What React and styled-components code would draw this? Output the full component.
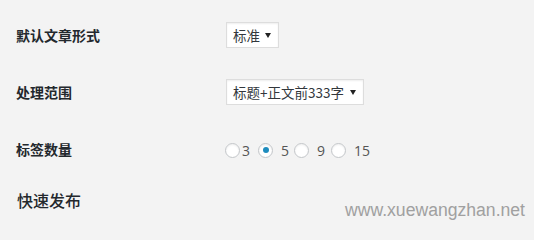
import React from "react";
import styled, { createGlobalStyle } from "styled-components";

const GlobalStyle = createGlobalStyle`
  html, body {
    margin: 0;
    padding: 0;
    background: #f3f3f3;
  }
  body {
    font-family: "Open Sans", "Noto Sans CJK SC", sans-serif;
    color: #23282d;
  }
`;

const Page = styled.div`
  position: relative;
  width: 534px;
  height: 227px;
  overflow: hidden;
  padding-top: 6px;
  box-sizing: border-box;
`;

const Row = styled.div`
  display: flex;
  align-items: center;
  height: 57px;
  padding-left: 16px;
`;

const Label = styled.div`
  width: 210px;
  flex: none;
  font-family: "Noto Sans CJK SC", sans-serif;
  font-size: 14px;
  font-weight: 700;
  color: #23282d;
`;

const SelectBox = styled.div`
  display: flex;
  align-items: center;
  justify-content: space-between;
  box-sizing: border-box;
  width: ${(p) => p.$width}px;
  height: 26px;
  padding: 0 7px 0 6px;
  background: #fff;
  border: 1px solid #ddd;
  box-shadow: inset 0 1px 2px rgba(0, 0, 0, 0.07);
  font-family: "Noto Sans CJK SC", sans-serif;
  font-size: 13.5px;
  color: #32373c;
`;

const Arrow = styled.span`
  width: 0;
  height: 0;
  border-left: 3px solid transparent;
  border-right: 3px solid transparent;
  border-top: 5px solid #222;
  margin-top: 1px;
`;

const Radios = styled.div`
  display: flex;
  align-items: center;
  margin-left: -1px;
  margin-top: 3px;
`;

const Option = styled.label`
  display: flex;
  align-items: center;
  margin-right: ${(p) => p.$after}px;
  font-family: "Open Sans", sans-serif;
  font-size: 14px;
  color: #555;
`;

const Circle = styled.span`
  box-sizing: border-box;
  display: flex;
  align-items: center;
  justify-content: center;
  width: 15px;
  height: 15px;
  border-radius: 50%;
  border: 1px solid #c3c6c9;
  background: #fff;
  box-shadow: inset 0 1px 2px rgba(0, 0, 0, 0.07);
  margin-right: ${(p) => p.$gap}px;

  &::after {
    content: "";
    display: ${(p) => (p.$checked ? "block" : "none")};
    width: 6px;
    height: 6px;
    border-radius: 50%;
    background: #1e8cbe;
  }
`;

const Heading = styled.h2`
  margin: 12px 0 0 17px;
  font-family: "Noto Sans CJK SC", sans-serif;
  font-size: 16px;
  font-weight: 500;
  line-height: 22px;
  color: #23282d;
`;

const Watermark = styled.div`
  position: absolute;
  right: 9px;
  bottom: 6px;
  font-family: "Liberation Sans", Arial, sans-serif;
  font-size: 17.6px;
  color: #a0a0a0;
`;

const options = [
  { value: "3", gap: 2, after: 8 },
  { value: "5", gap: 8, after: 5, checked: true },
  { value: "9", gap: 8, after: 6 },
  { value: "15", gap: 8, after: 0 },
];

export default function App() {
  return (
    <Page>
      <GlobalStyle />
      <Row>
        <Label>默认文章形式</Label>
        <SelectBox $width={53}>
          标准
          <Arrow />
        </SelectBox>
      </Row>
      <Row>
        <Label>处理范围</Label>
        <SelectBox $width={138}>
          标题+正文前333字
          <Arrow />
        </SelectBox>
      </Row>
      <Row>
        <Label>标签数量</Label>
        <Radios>
          {options.map((o) => (
            <Option key={o.value} $after={o.after}>
              <Circle $gap={o.gap} $checked={o.checked} />
              {o.value}
            </Option>
          ))}
        </Radios>
      </Row>
      <Heading>快速发布</Heading>
      <Watermark>www.xuewangzhan.net</Watermark>
    </Page>
  );
}
